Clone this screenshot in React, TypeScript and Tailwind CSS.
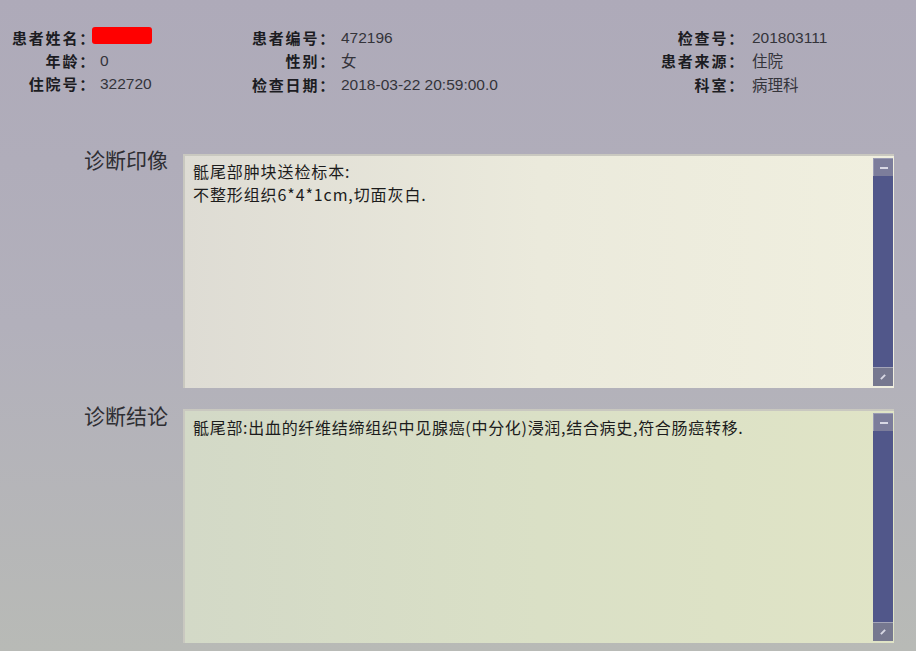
import React from "react";

const cjk = { fontFamily: '"Noto Sans CJK SC", "Noto Sans", sans-serif' };
const mixed = { fontFamily: '"Liberation Sans", "Noto Sans CJK SC", sans-serif' };

function Row({ label, children }: { label: string; children: React.ReactNode }) {
  return (
    <>
      <div className="text-right font-bold text-[15px] leading-[23px] tracking-[1.8px] text-[#1c1c22]" style={cjk}>
        {label}
      </div>
      <div className="text-[15.5px] leading-[23px] text-[#34343a]" style={mixed}>
        {children}
      </div>
    </>
  );
}

function ScrollBar() {
  return (
    <div className="flex w-[20px] flex-col py-[2px] mr-[1px]">
      <div className="flex h-[18px] items-center justify-center bg-[#7c7d9b] border-t border-l border-[#9a9bb4]">
        <div className="h-[2px] w-[8px] bg-[#d8d8e4]" />
      </div>
      <div className="flex-1 bg-[#51578a]" />
      <div className="flex h-[19px] items-center justify-center bg-[#76788f] border-t border-[#a4a5b8]">
        <div className="h-[2px] w-[6px] -rotate-45 bg-[#d8d8e4]" />
      </div>
    </div>
  );
}

function Section({ label, lines, boxClass, boxMt, padTop, track }: { label: string; lines: string[]; boxClass: string; boxMt: string; padTop: string; track: string }) {
  return (
    <div className="flex items-start">
      <div className="w-[168px] text-right text-[21px] leading-[24px] text-[#2e2e33]" style={cjk}>
        {label}
      </div>
      <div className={`ml-[15px] flex h-[234px] w-[711px] border-t-2 border-l-2 border-[#c9c8c0] ${boxMt} ${boxClass}`}>
        <div className={`flex-1 pl-[8px] ${padTop} text-[16px] leading-[23px] ${track} text-[#1c1c1c]`} style={cjk}>
          {lines.map((l, i) => (
            <div key={i}>{l}</div>
          ))}
        </div>
        <ScrollBar />
      </div>
    </div>
  );
}

export default function App() {
  return (
    <div className="h-[651px] w-[916px] overflow-hidden bg-gradient-to-b from-[#aeaab9] via-[#b2b0bb] to-[#b8bab6]">
      <div className="flex pt-[26px]">
        <div className="grid w-[200px] grid-cols-[96px_1fr] gap-x-[4px] content-start">
          <Row label="患者姓名：">
            <div className="ml-[-8px] mt-[1px] h-[17px] w-[60px] rounded-[3px] bg-[#ff0000]" />
          </Row>
          <Row label="年龄：">0</Row>
          <Row label="住院号：">322720</Row>
        </div>
        <div className="grid w-[400px] grid-cols-[136px_1fr] gap-x-[5px] content-start">
          <Row label="患者编号：">472196</Row>
          <Row label="性别：">
            <span style={cjk}>女</span>
          </Row>
          <Row label="检查日期：">2018-03-22 20:59:00.0</Row>
        </div>
        <div className="grid flex-1 grid-cols-[145px_1fr] gap-x-[7px] content-start">
          <Row label="检查号：">201803111</Row>
          <Row label="患者来源：">
            <span style={cjk}>住院</span>
          </Row>
          <Row label="科室：">
            <span style={cjk}>病理科</span>
          </Row>
        </div>
      </div>
      <div className="mt-[50px] flex flex-col gap-[15px]">
        <Section
          label="诊断印像"
          lines={["骶尾部肿块送检标本:", "不整形组织6*4*1cm,切面灰白."]}
          boxClass="bg-gradient-to-r from-[#dedcd4] via-[#ebeadc] to-[#f0efdf]"
          boxMt="mt-[7px]"
          padTop="pt-[4px]"
          track="tracking-[0.9px]"
        />
        <Section
          label="诊断结论"
          lines={["骶尾部:出血的纤维结缔组织中见腺癌(中分化)浸润,结合病史,符合肠癌转移."]}
          boxClass="bg-gradient-to-r from-[#d3d9c7] via-[#dae0c6] to-[#e0e4c6]"
          boxMt="mt-[6px]"
          padTop="pt-[5px]"
          track="tracking-[0.7px]"
        />
      </div>
    </div>
  );
}
